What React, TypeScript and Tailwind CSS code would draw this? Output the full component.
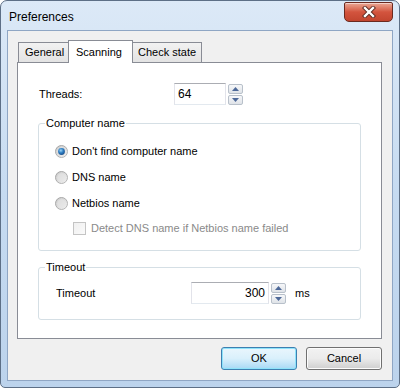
import React from "react";

function CloseButton() {
  return (
    <div className="mt-px flex h-[20px] w-[49px] items-center justify-center rounded-b-[5px] rounded-t-[2px] border border-[#6b2a20] bg-gradient-to-b from-[#e9a795] via-[#d3543e] to-[#c2452f] shadow-[inset_0_1px_0_rgba(255,255,255,0.5)]">
      <svg width="14" height="12" viewBox="0 0 14 12">
        <path d="M3 2 L11 10 M11 2 L3 10" stroke="#5a2a22" strokeWidth="4.2" strokeLinecap="square" />
        <path d="M3 2 L11 10 M11 2 L3 10" stroke="#ffffff" strokeWidth="2.4" strokeLinecap="square" />
      </svg>
    </div>
  );
}

function Spinner() {
  return (
    <div className="flex w-[15px] flex-col gap-px">
      <div className="flex h-[10px] items-center justify-center rounded-[2px] border border-[#b8c0ca] bg-gradient-to-b from-[#f6f7f9] to-[#dfe3e8]">
        <svg width="7" height="4" viewBox="0 0 7 4">
          <path d="M0 4 L3.5 0 L7 4 Z" fill="#4d6898" />
        </svg>
      </div>
      <div className="flex h-[10px] items-center justify-center rounded-[2px] border border-[#b8c0ca] bg-gradient-to-b from-[#f6f7f9] to-[#dfe3e8]">
        <svg width="7" height="4" viewBox="0 0 7 4">
          <path d="M0 0 L7 0 L3.5 4 Z" fill="#4d6898" />
        </svg>
      </div>
    </div>
  );
}

function TextBox({ value, width, alignRight }: { value: string; width: string; alignRight?: boolean }) {
  return (
    <div
      className={`flex h-[22px] ${width} items-center border border-[#e2e3ea] border-t-[#abadb3] border-b-[#e3e9ef] bg-white px-[3px] text-[12px] ${
        alignRight ? "justify-end" : "justify-start"
      }`}
    >
      {value}
    </div>
  );
}

function Radio({ checked }: { checked?: boolean }) {
  return (
    <svg width="13" height="13" viewBox="0 0 13 13">
      <defs>
        <linearGradient id="rb" x1="0" y1="0" x2="1" y2="1">
          <stop offset="0" stopColor="#a2a2a2" />
          <stop offset="1" stopColor="#b9b9b9" />
        </linearGradient>
        <linearGradient id="rf" x1="0" y1="0" x2="1" y2="1">
          <stop offset="0" stopColor="#c8c8c8" />
          <stop offset="1" stopColor="#f4f4f4" />
        </linearGradient>
        <radialGradient id="rd" cx="0.4" cy="0.35" r="0.7">
          <stop offset="0" stopColor="#9ed5f5" />
          <stop offset="0.5" stopColor="#2f7fc4" />
          <stop offset="1" stopColor="#1b4d88" />
        </radialGradient>
      </defs>
      <circle cx="6.5" cy="6.5" r="6" fill="url(#rf)" stroke="url(#rb)" strokeWidth="1" />
      <circle cx="6.5" cy="6.5" r="4.2" fill="#e6e6e6" opacity="0.6" />
      {checked && <circle cx="6.5" cy="6.5" r="3.4" fill="url(#rd)" />}
    </svg>
  );
}

function GroupBox({ label, className, children }: { label: string; className: string; children: React.ReactNode }) {
  return (
    <div className={`relative ml-[20px] w-[323px] rounded-[3px] border border-[#d5dfe5] ${className}`}>
      <span className="absolute -top-[8px] left-[6px] bg-white px-[1px] leading-[14px]">{label}</span>
      {children}
    </div>
  );
}

export default function App() {
  return (
    <div className="h-[389px] w-[400px] bg-white font-['Liberation_Sans',Arial,sans-serif] text-[11px] text-black">
      <div className="flex h-[388px] flex-col rounded-b-[5px] rounded-t-[7px] border border-[#5d6f86] bg-gradient-to-b from-[#dce9f7] via-[#c6dbf1] to-[#bcd3ec]">
        <div className="flex h-[29px] items-start justify-between pl-[8px] pr-[6px]">
          <span className="mt-[7px] text-[12px]">Preferences</span>
          <CloseButton />
        </div>

        <div className="mx-[6px] mb-[6px] flex flex-1 flex-col border border-[#8fa6c4] bg-[#f0f0f0] px-[9px] pt-[9px]">
          <div className="flex h-[23px] items-end pl-[1px]">
            <div className="mb-px flex h-[20px] w-[51px] items-center border border-b-0 border-[#898c95] bg-gradient-to-b from-[#f2f2f2] to-[#e3e3e3] pl-[6px]">
              General
            </div>
            <div className="relative z-10 -ml-px flex h-[23px] w-[65px] items-start border border-b-0 border-[#898c95] bg-white pl-[7px] pt-[3px]">
              Scanning
            </div>
            <div className="-ml-px mb-px flex h-[20px] w-[70px] items-center border border-b-0 border-[#898c95] bg-gradient-to-b from-[#f2f2f2] to-[#e3e3e3] pl-[5px]">
              Check state
            </div>
          </div>

          <div className="-mt-px flex h-[277px] w-[365px] flex-col border border-[#898c95] bg-white">
            <div className="mt-[20px] flex items-center pl-[21px]">
              <span className="w-[135px]">Threads:</span>
              <TextBox value="64" width="w-[52px]" />
              <div className="ml-[2px]">
                <Spinner />
              </div>
            </div>

            <GroupBox label="Computer name" className="mt-[18px] h-[128px] pt-[14px]">
              <div className="flex h-[26px] items-center gap-[4px] pl-[16px]">
                <Radio checked />
                <span>Don't find computer name</span>
              </div>
              <div className="flex h-[26px] items-center gap-[4px] pl-[16px]">
                <Radio />
                <span>DNS name</span>
              </div>
              <div className="flex h-[26px] items-center gap-[4px] pl-[16px]">
                <Radio />
                <span>Netbios name</span>
              </div>
              <div className="flex h-[24px] items-center gap-[5px] pl-[34px] text-[#8a8a8a]">
                <div className="h-[13px] w-[13px] border border-[#c4c4c4] bg-gradient-to-br from-[#f0f0f0] to-[#fafafa]" />
                <span>Detect DNS name if Netbios name failed</span>
              </div>
            </GroupBox>

            <GroupBox label="Timeout" className="mt-[16px] h-[53px]">
              <div className="mt-[14px] flex items-center pl-[17px]">
                <span className="w-[135px]">Timeout</span>
                <TextBox value="300" width="w-[78px]" alignRight />
                <div className="ml-[2px]">
                  <Spinner />
                </div>
                <span className="ml-[9px]">ms</span>
              </div>
            </GroupBox>
          </div>

          <div className="mt-[8px] flex w-[365px] justify-end gap-[9px]">
            <button className="h-[23px] w-[76px] rounded-[3px] border border-[#3c7fb1] bg-gradient-to-b from-[#eaf6fd] via-[#d9f0fc] to-[#a7d9f5] text-[11px] shadow-[inset_0_0_0_1px_#8ee3fa]">
              OK
            </button>
            <button className="h-[23px] w-[76px] rounded-[3px] border border-[#707070] bg-gradient-to-b from-[#f2f2f2] via-[#ebebeb] to-[#cfcfcf] text-[11px] shadow-[inset_0_0_0_1px_#fcfcfc]">
              Cancel
            </button>
          </div>
        </div>
      </div>
    </div>
  );
}
